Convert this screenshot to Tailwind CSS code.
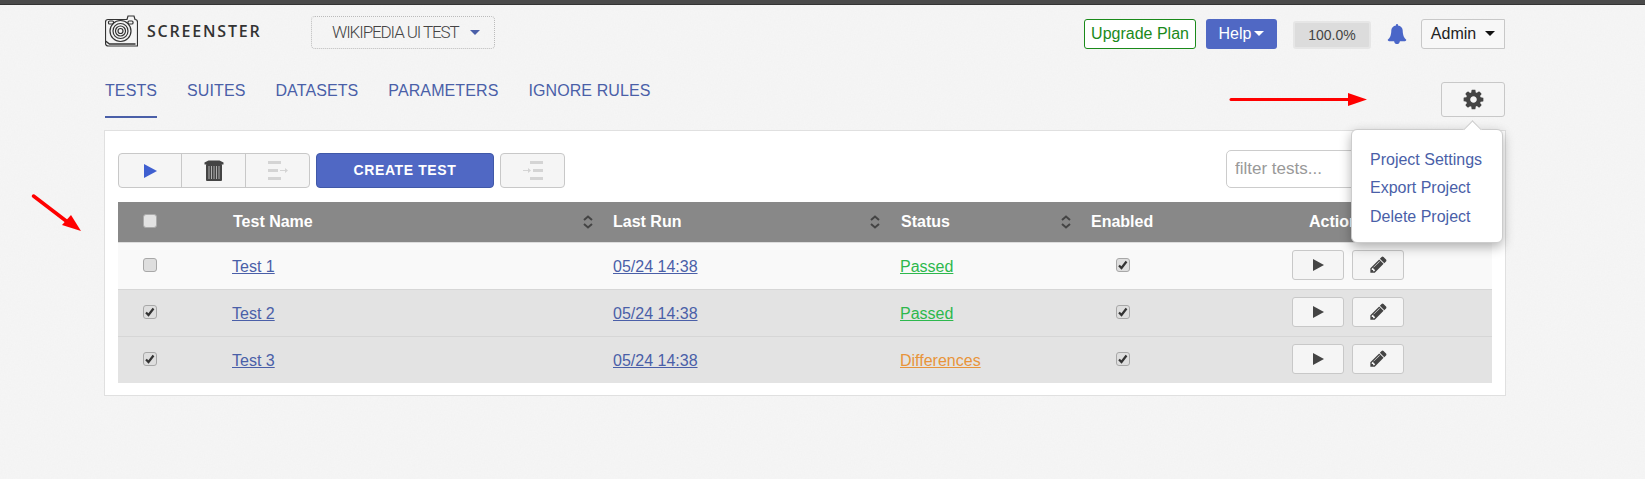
<!DOCTYPE html>
<html lang="en">
<head>
    <meta charset="UTF-8">
    <title>Screenster</title>
    <script src="https://cdn.jsdelivr.net/npm/@tailwindcss/browser@4"></script>
</head>
<body class="bg-[#f6f6f6] font-['Liberation_Sans',sans-serif] text-[16px] overflow-hidden">
<div class="relative h-[479px] w-[1645px]">
    <!-- Paper texture of the page background -->
    <svg class="absolute left-0 top-0 -z-10 w-[1645px] h-[479px]">
        <filter id="paper"><feTurbulence type="fractalNoise" baseFrequency="0.7" numOctaves="2"/><feColorMatrix values="0 0 0 0 0.4 0 0 0 0 0.4 0 0 0 0 0.4 0 0 0 0.05 0"/></filter>
        <rect width="1645" height="479" filter="url(#paper)"/>
    </svg>
    <div class="h-[5px] bg-[#4a4a4a] border-b border-[#333]"></div>

    <!-- Header -->
    <header class="ml-[105px] w-[1400px] h-[44px] flex items-start">
        <svg class="mt-[9px] w-[33px] h-[33px] text-[#333]" viewBox="0 0 33 33" fill="none" stroke="currentColor" stroke-width="1.2">
            <path d="M3 5.500h19l1-3.500h6l1 3.500c1.500 0 2.500 1 2.500 2.500v24h-29c-2 0-3-1-3-3v-21c0-1.500 1-2.500 2.500-2.500z"/>
            <path d="M0.500 27l4 3h26" stroke-width="1.500"/>
            <rect x="3.500" y="7" width="5" height="3" rx="1"/>
            <rect x="23" y="7" width="5" height="3" rx="1"/>
            <circle cx="15.500" cy="17" r="10.500"/>
            <circle cx="15.500" cy="17" r="7.500"/>
            <circle cx="15.500" cy="17" r="5"/>
            <circle cx="15.500" cy="17" r="2.500"/>
        </svg>
        <span class="ml-[9px] mt-[15px] w-[164px] font-['Open_Sans',sans-serif] font-semibold text-[16px] leading-[22px] tracking-[1.8px] text-[#333]">SCREENSTER</span>
        <div class="mt-[11px] w-[184px] h-[33px] flex items-center pl-[20px] border border-dotted border-[#bbb] rounded-[4px]">
            <span class="font-['Roboto',sans-serif] font-light text-[17px] tracking-[-1.1px] text-[#444]">WIKIPEDIA UI TEST</span>
            <span class="ml-[11px] w-0 h-0 border-x-[5px] border-x-transparent border-t-[5px] border-t-[#4a5fa8]"></span>
        </div>
        <div class="ml-auto flex items-start mt-[14px]">
            <a class="h-[30px] w-[112px] pb-[1px] flex items-center justify-center bg-white border border-[#1a8a1a] rounded-[3px] text-[#1a8a1a]">Upgrade Plan</a>
            <a class="ml-[10px] h-[30px] w-[71px] pb-[1px] flex items-center justify-center bg-[#5068c4] rounded-[3px] text-white">Help<span class="ml-[3px] w-0 h-0 border-x-[5px] border-x-transparent border-t-[5px] border-t-white"></span></a>
            <div class="ml-[16px] mt-[2px] h-[28px] w-[78px] flex items-center justify-center bg-[#dcdcdc] border-2 border-[#e6e6e6] rounded-[3px] text-[14px] text-[#444]">100.0%</div>
            <svg class="ml-[16px] mt-[5px] w-[20px] h-[20px] text-[#4a66c8]" viewBox="0 0 1792 1792" fill="currentColor"><path d="M1728 1408q0 52-38 90t-90 38h-448q0 106-75 181t-181 75-181-75-75-181h-448q-52 0-90-38t-38-90q50-42 91-88t85-119.500 74.500-158.500 50-206 19.500-260q0-152 117-282.500t307-158.500q-8-19-8-39 0-40 28-68t68-28 68 28 28 68q0 20-8 39 190 28 307 158.500t117 282.500q0 139 19.500 260t50 206 74.500 158.500 85 119.500 91 88z"/></svg>
            <div class="ml-[14px] h-[30px] w-[84px] pb-[1px] flex items-center justify-center bg-[#f7f7f7] border border-[#c8c8c8] rounded-l-[3px] text-[#222]">Admin<span class="ml-[9px] w-0 h-0 border-x-[5px] border-x-transparent border-t-[5px] border-t-[#111]"></span></div>
        </div>
    </header>

    <!-- Tabs -->
    <div class="mt-[23px] ml-[105px] w-[1400px] h-[46px] flex items-start text-[#4a5fa8]">
        <nav class="flex gap-[30px] tracking-[0.1px]">
            <a class="h-[46px] pt-[9px] leading-[20px] border-b-2 border-[#4a5fa8]">TESTS</a>
            <a class="pt-[9px] leading-[20px]">SUITES</a>
            <a class="pt-[9px] leading-[20px]">DATASETS</a>
            <a class="pt-[9px] leading-[20px]">PARAMETERS</a>
            <a class="pt-[9px] leading-[20px]">IGNORE RULES</a>
        </nav>
        <button class="ml-auto mt-[10px] w-[64px] h-[35px] flex items-center justify-center bg-[#f5f5f5] border border-[#c8c8c8] rounded-[3px]">
            <svg class="w-[23px] h-[23px] text-[#444]" viewBox="0 0 1792 1792" fill="currentColor"><path d="M1152 896q0-106-75-181t-181-75-181 75-75 181 75 181 181 75 181-75 75-181zm512-109v222q0 12-8 23t-20 13l-185 28q-19 54-39 91 35 50 107 138 10 12 10 25t-9 23q-27 37-99 108t-94 71q-12 0-26-9l-138-108q-44 23-91 38-16 136-29 186-7 28-36 28h-222q-14 0-24.500-8.500t-11.500-21.500l-28-184q-49-16-90-37l-141 107q-10 9-25 9-14 0-25-11-126-114-165-168-7-10-7-23 0-12 8-23 15-21 51-66.500t54-70.500q-27-50-41-99l-183-27q-13-2-21-12.500t-8-23.500v-222q0-12 8-23t19-13l186-28q14-46 39-92-40-57-107-138-10-12-10-24 0-10 9-23 26-36 98.500-107.500t94.500-71.500q13 0 26 10l138 107q44-23 91-38 16-136 29-186 7-28 36-28h222q14 0 24.500 8.500t11.500 21.500l28 184q49 16 90 37l142-107q9-9 24-9 13 0 25 10 129 119 165 170 7 8 7 22 0 12-8 23-15 21-51 66.500t-54 70.500q26 50 41 98l183 28q13 2 21 12.500t8 23.500z"/></svg>
        </button>
    </div>

    <!-- Card -->
    <main class="mt-[12px] ml-[104px] w-[1402px] bg-white border border-[#e0e0e0] px-[13px] pt-[22px] pb-[12px]">
        <div class="flex items-start h-[35px]">
            <div class="flex h-[35px] bg-[#f5f5f5] border border-[#c8c8c8] rounded-[4px]">
                <button class="w-[63px] flex items-center justify-center border-r border-[#c8c8c8]">
                    <svg class="w-[14px] h-[14px] text-[#3f5fd0]" viewBox="0 0 14 14" fill="currentColor"><path d="M1 0l13 7-13 7z"/></svg>
                </button>
                <button class="w-[64px] flex items-center justify-center border-r border-[#c8c8c8]">
                    <svg class="w-[20px] h-[21px]" viewBox="0 0 20 21"><path d="M0.500 2.500l4-2h11l4 2v2h-19z" fill="#444"/><rect x="2" y="4" width="16" height="17" rx="1" fill="#444"/><path d="M5 6v13M7.500 6v13M10 6v13M12.500 6v13M15 6v13" stroke="#bbb" stroke-width="0.900"/></svg>
                </button>
                <button class="w-[63px] flex items-center justify-center">
                    <svg class="w-[20px] h-[19px]" viewBox="0 0 20 19" fill="#d4d4d4"><rect x="0" y="0" width="13" height="3"/><rect x="0" y="8" width="10" height="3"/><rect x="0" y="16" width="13" height="3"/><path d="M12 9h5v-2l3 2.500-3 2.500v-2h-5z"/></svg>
                </button>
            </div>
            <button class="ml-[6px] w-[178px] h-[35px] bg-[#5068c4] border border-[#4058a8] rounded-[4px] text-white font-bold text-[14px] tracking-[0.6px]">CREATE TEST</button>
            <button class="ml-[6px] w-[65px] h-[35px] flex items-center justify-center bg-[#f5f5f5] border border-[#c8c8c8] rounded-[4px]">
                <svg class="w-[20px] h-[19px]" viewBox="0 0 20 19" fill="#d4d4d4"><rect x="7" y="0" width="13" height="3"/><rect x="10" y="8" width="10" height="3"/><rect x="7" y="16" width="13" height="3"/><path d="M0 9h5v-2l3 2.500-3 2.500v-2h-5z"/></svg>
            </button>
            <input type="text" placeholder="filter tests..." class="ml-auto -mt-[3px] w-[266px] h-[38px] px-[8px] bg-white border border-[#ccc] rounded-[5px] text-[17px] placeholder:text-[#999]">
        </div>

        <table class="mt-[14px] w-[1374px] table-fixed border-collapse">
            <colgroup><col class="w-[104px]"><col class="w-[380px]"><col class="w-[288px]"><col class="w-[190px]"><col class="w-[120px]"><col></colgroup>
            <thead>
                <tr class="h-[40px] bg-[#888] text-white text-left font-bold">
                    <th class="pl-[25px] pt-[1px]"><span class="block w-[14px] h-[14px] -mt-[3px] bg-[#e2e2e2] border border-[#aaa] rounded-[3px]"></span></th>
                    <th class="pl-[11px] pr-[9px] pt-[1px]"><div class="flex items-center justify-between">Test Name<svg class="w-[10px] h-[14px]" viewBox="0 0 10 14" fill="none" stroke="#444" stroke-width="2"><path d="M1 5l4-3.500 4 3.500M1 9l4 3.500 4-3.500"/></svg></div></th>
                    <th class="pl-[11px] pr-[10px] pt-[1px]"><div class="flex items-center justify-between">Last Run<svg class="w-[10px] h-[14px]" viewBox="0 0 10 14" fill="none" stroke="#444" stroke-width="2"><path d="M1 5l4-3.500 4 3.500M1 9l4 3.500 4-3.500"/></svg></div></th>
                    <th class="pl-[11px] pr-[9px] pt-[1px]"><div class="flex items-center justify-between">Status<svg class="w-[10px] h-[14px]" viewBox="0 0 10 14" fill="none" stroke="#444" stroke-width="2"><path d="M1 5l4-3.500 4 3.500M1 9l4 3.500 4-3.500"/></svg></div></th>
                    <th class="pl-[11px] pt-[1px]">Enabled</th>
                    <th class="pl-[109px] pt-[1px]">Actions</th>
                </tr>
            </thead>
            <tbody>
                <tr class="h-[47px] bg-[#f9f9f9] border-t border-[#ddd]">
                    <td class="pl-[25px] pb-[2px]"><span class="block w-[14px] h-[14px] bg-[#dedede] border border-[#a8a8a8] rounded-[3px]"></span></td>
                    <td class="pl-[10px] pt-[2px]"><a class="underline text-[#4a5fa8]">Test 1</a></td>
                    <td class="pl-[11px] pt-[2px]"><a class="underline text-[#4a5fa8]">05/24 14:38</a></td>
                    <td class="pl-[10px] pt-[2px]"><a class="underline text-[#2db84d]">Passed</a></td>
                    <td class="pl-[36px] pb-[2px]"><span class="flex items-center justify-center w-[14px] h-[14px] bg-[#dedede] border border-[#a8a8a8] rounded-[3px]"><svg class="w-[10px] h-[10px]" viewBox="0 0 10 10" fill="none" stroke="#333" stroke-width="2.200"><path d="M1 5.500l2.500 2.500 5-6.500"/></svg></span></td>
                    <td class="pl-[92px] pb-[2px]"><div class="flex gap-[8px]">
                        <button class="w-[52px] h-[30px] flex items-center justify-center bg-[#f5f5f5] border border-[#c8c8c8] rounded-[3px]"><svg class="w-[11px] h-[12px] text-[#444]" viewBox="0 0 11 12" fill="currentColor"><path d="M0 0l11 6-11 6z"/></svg></button>
                        <button class="w-[52px] h-[30px] flex items-center justify-center bg-[#f5f5f5] border border-[#c8c8c8] rounded-[3px]"><svg class="w-[19px] h-[19px] text-[#444]" viewBox="0 0 1792 1792" fill="currentColor"><path d="M491 1536l91-91-235-235-91 91v107h128v128h107zm523-928q0-22-22-22-10 0-17 7l-542 542q-7 7-7 17 0 22 22 22 10 0 17-7l542-542q7-7 7-17zm-54-192l416 416-832 832h-416v-416zm683 96q0 53-37 90l-166 166-416-416 166-165q36-38 90-38 53 0 91 38l235 234q37 39 37 91z"/></svg></button>
                    </div></td>
                </tr>
                <tr class="h-[47px] bg-[#e3e3e3] border-t border-[#d6d6d6]">
                    <td class="pl-[25px] pb-[2px]"><span class="flex items-center justify-center w-[14px] h-[14px] bg-[#dedede] border border-[#a8a8a8] rounded-[3px]"><svg class="w-[10px] h-[10px]" viewBox="0 0 10 10" fill="none" stroke="#333" stroke-width="2.200"><path d="M1 5.500l2.500 2.500 5-6.500"/></svg></span></td>
                    <td class="pl-[10px] pt-[2px]"><a class="underline text-[#4a5fa8]">Test 2</a></td>
                    <td class="pl-[11px] pt-[2px]"><a class="underline text-[#4a5fa8]">05/24 14:38</a></td>
                    <td class="pl-[10px] pt-[2px]"><a class="underline text-[#2db84d]">Passed</a></td>
                    <td class="pl-[36px] pb-[2px]"><span class="flex items-center justify-center w-[14px] h-[14px] bg-[#dedede] border border-[#a8a8a8] rounded-[3px]"><svg class="w-[10px] h-[10px]" viewBox="0 0 10 10" fill="none" stroke="#333" stroke-width="2.200"><path d="M1 5.500l2.500 2.500 5-6.500"/></svg></span></td>
                    <td class="pl-[92px] pb-[2px]"><div class="flex gap-[8px]">
                        <button class="w-[52px] h-[30px] flex items-center justify-center bg-[#f5f5f5] border border-[#c8c8c8] rounded-[3px]"><svg class="w-[11px] h-[12px] text-[#444]" viewBox="0 0 11 12" fill="currentColor"><path d="M0 0l11 6-11 6z"/></svg></button>
                        <button class="w-[52px] h-[30px] flex items-center justify-center bg-[#f5f5f5] border border-[#c8c8c8] rounded-[3px]"><svg class="w-[19px] h-[19px] text-[#444]" viewBox="0 0 1792 1792" fill="currentColor"><path d="M491 1536l91-91-235-235-91 91v107h128v128h107zm523-928q0-22-22-22-10 0-17 7l-542 542q-7 7-7 17 0 22 22 22 10 0 17-7l542-542q7-7 7-17zm-54-192l416 416-832 832h-416v-416zm683 96q0 53-37 90l-166 166-416-416 166-165q36-38 90-38 53 0 91 38l235 234q37 39 37 91z"/></svg></button>
                    </div></td>
                </tr>
                <tr class="h-[47px] bg-[#e3e3e3] border-t border-[#d6d6d6]">
                    <td class="pl-[25px] pb-[2px]"><span class="flex items-center justify-center w-[14px] h-[14px] bg-[#dedede] border border-[#a8a8a8] rounded-[3px]"><svg class="w-[10px] h-[10px]" viewBox="0 0 10 10" fill="none" stroke="#333" stroke-width="2.200"><path d="M1 5.500l2.500 2.500 5-6.500"/></svg></span></td>
                    <td class="pl-[10px] pt-[2px]"><a class="underline text-[#4a5fa8]">Test 3</a></td>
                    <td class="pl-[11px] pt-[2px]"><a class="underline text-[#4a5fa8]">05/24 14:38</a></td>
                    <td class="pl-[10px] pt-[2px]"><a class="underline text-[#e8943a]">Differences</a></td>
                    <td class="pl-[36px] pb-[2px]"><span class="flex items-center justify-center w-[14px] h-[14px] bg-[#dedede] border border-[#a8a8a8] rounded-[3px]"><svg class="w-[10px] h-[10px]" viewBox="0 0 10 10" fill="none" stroke="#333" stroke-width="2.200"><path d="M1 5.500l2.500 2.500 5-6.500"/></svg></span></td>
                    <td class="pl-[92px] pb-[2px]"><div class="flex gap-[8px]">
                        <button class="w-[52px] h-[30px] flex items-center justify-center bg-[#f5f5f5] border border-[#c8c8c8] rounded-[3px]"><svg class="w-[11px] h-[12px] text-[#444]" viewBox="0 0 11 12" fill="currentColor"><path d="M0 0l11 6-11 6z"/></svg></button>
                        <button class="w-[52px] h-[30px] flex items-center justify-center bg-[#f5f5f5] border border-[#c8c8c8] rounded-[3px]"><svg class="w-[19px] h-[19px] text-[#444]" viewBox="0 0 1792 1792" fill="currentColor"><path d="M491 1536l91-91-235-235-91 91v107h128v128h107zm523-928q0-22-22-22-10 0-17 7l-542 542q-7 7-7 17 0 22 22 22 10 0 17-7l542-542q7-7 7-17zm-54-192l416 416-832 832h-416v-416zm683 96q0 53-37 90l-166 166-416-416 166-165q36-38 90-38 53 0 91 38l235 234q37 39 37 91z"/></svg></button>
                    </div></td>
                </tr>
            </tbody>
        </table>
    </main>

    <!-- Settings popover -->
    <div class="absolute left-[1351px] top-[129px] w-[152px] h-[114px] pl-[18px] pt-[16px] bg-white border border-[#ccc] rounded-[6px] shadow-[0_4px_12px_rgba(0,0,0,0.3)] text-[#4a5fa8] leading-[28px]">
        <span class="absolute -top-[7px] left-[114px] w-[13px] h-[13px] rotate-45 bg-white border-l border-t border-[#ccc]"></span>
        <a class="block">Project Settings</a>
        <a class="block">Export Project</a>
        <a class="block mt-[1px]">Delete Project</a>
    </div>

    <!-- Red annotation arrows -->
    <svg class="absolute left-0 top-0 w-[1645px] h-[479px] pointer-events-none" viewBox="0 0 1645 479" fill="none">
        <path d="M1231 99.500h120" stroke="#f00" stroke-width="3" stroke-linecap="round"/>
        <path d="M1348 93l19 6.500-19 6.500z" fill="#f00"/>
        <path d="M33.500 196l34 26" stroke="#f00" stroke-width="3.500" stroke-linecap="round"/>
        <path d="M71 215l10 16-19-6z" fill="#f00"/>
    </svg>
</div>
</body>
</html>
